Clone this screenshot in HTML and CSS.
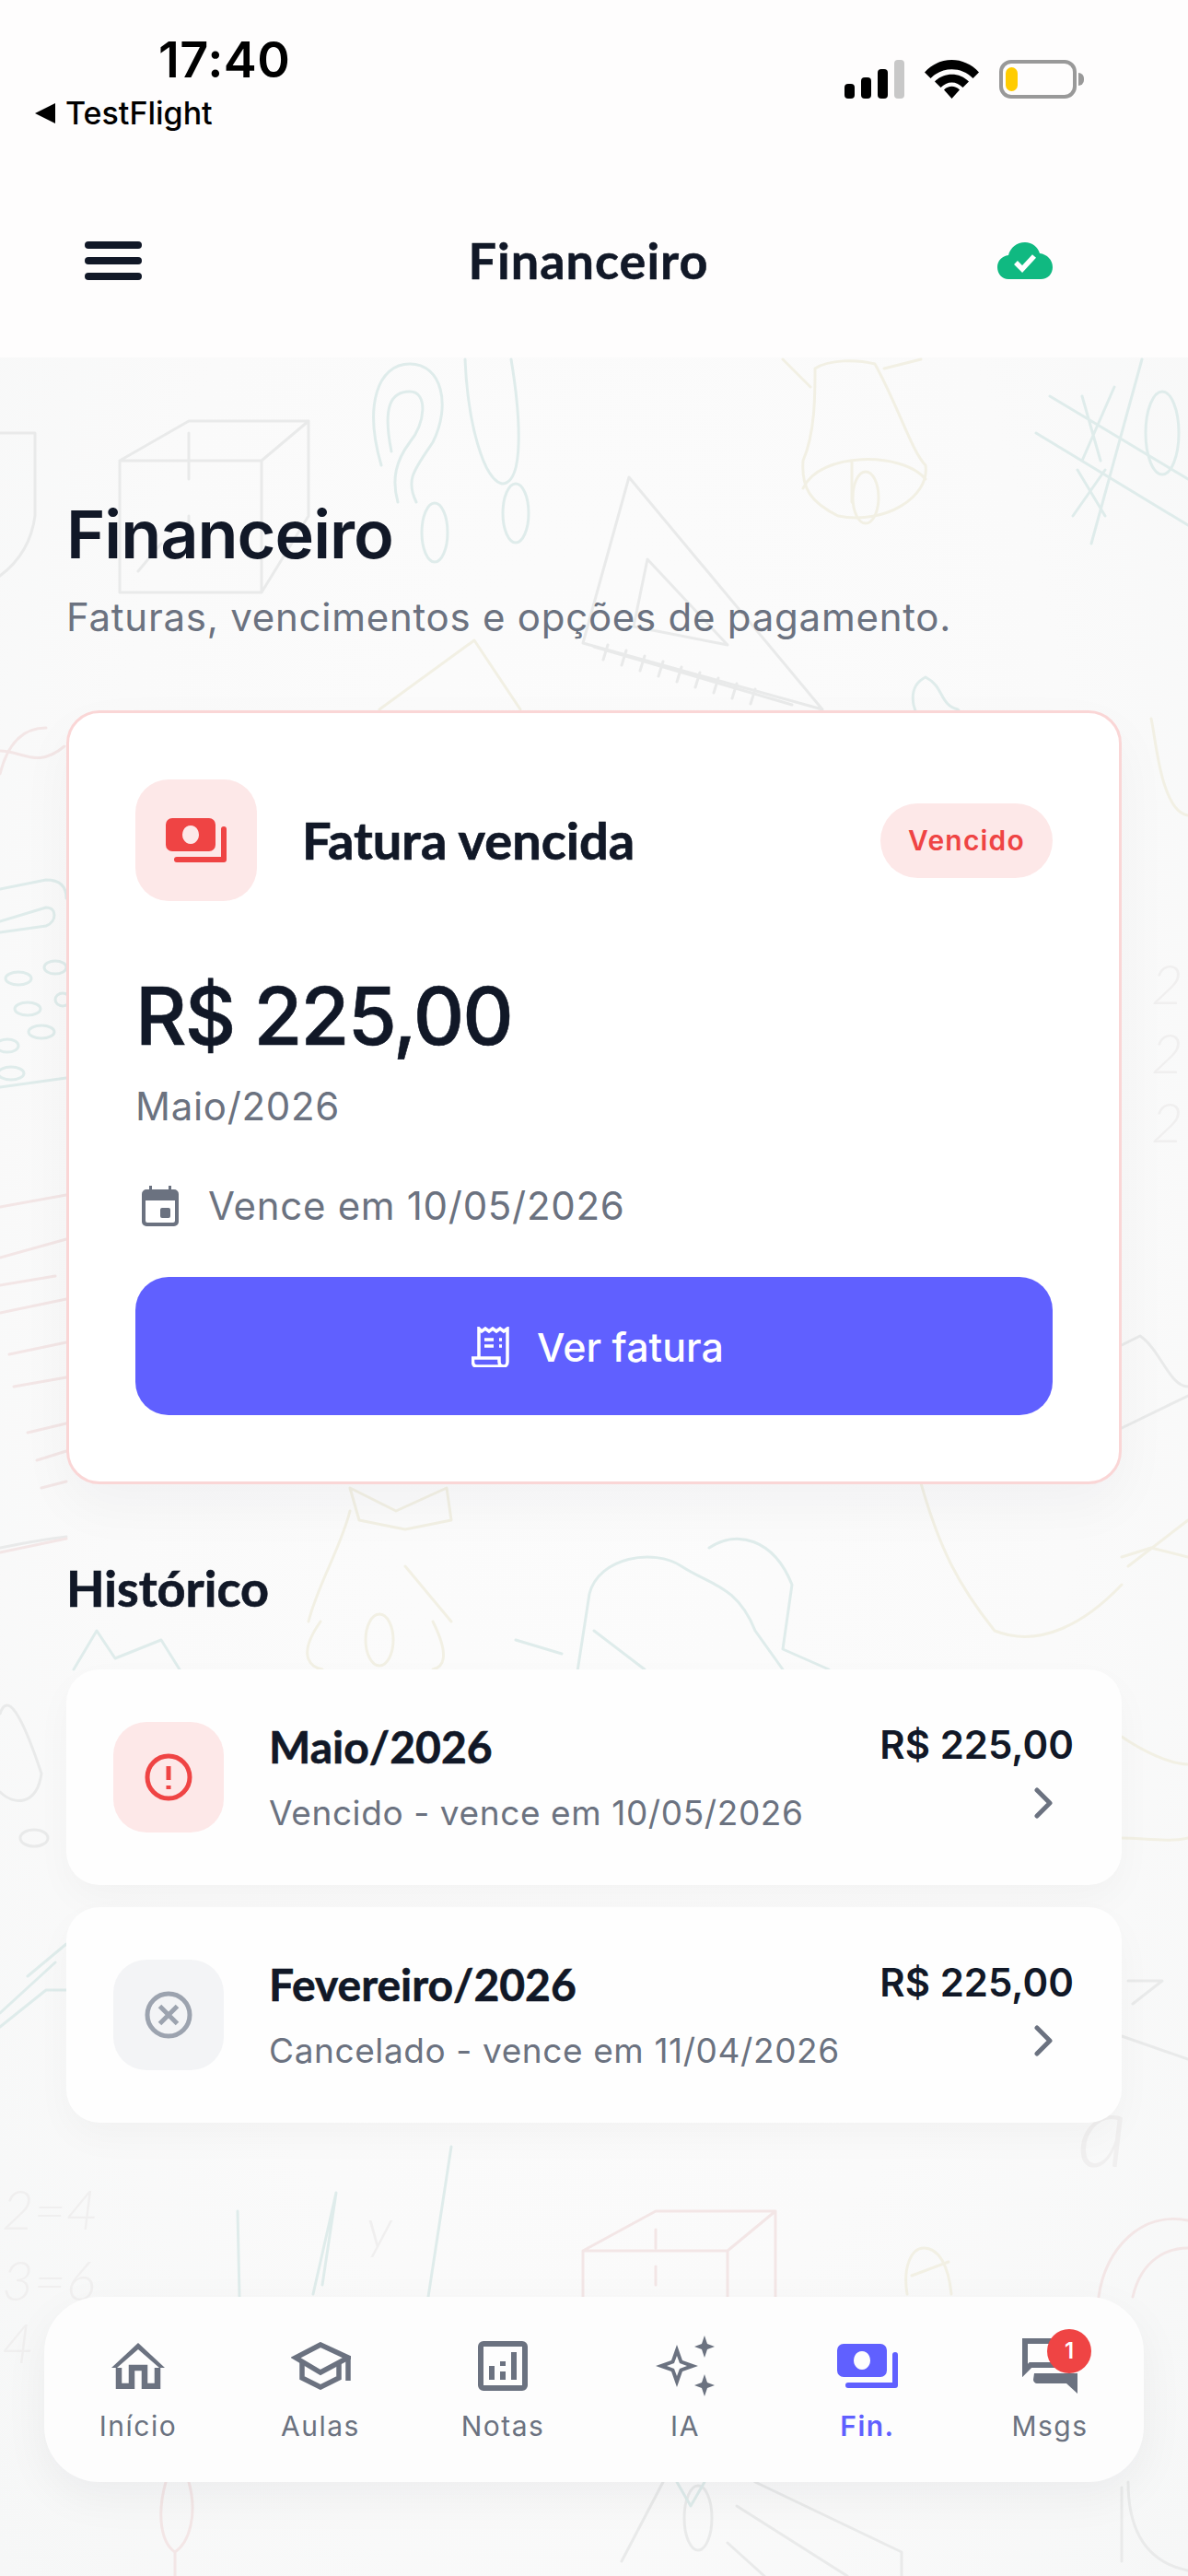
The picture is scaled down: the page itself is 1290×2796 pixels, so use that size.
FILE: index.html
```html
<!DOCTYPE html>
<html lang="pt-BR">
<head>
<meta charset="utf-8">
<title>Financeiro</title>
<link rel="stylesheet" href="styles.css">
</head>
<body>
<svg width="0" height="0" class="defs">
  <defs>
    <symbol id="money" viewBox="0 0 66 48">
      <path fill-rule="evenodd" d="M7 0H47a7 7 0 0 1 7 7V29a7 7 0 0 1-7 7H7a7 7 0 0 1-7-7V7a7 7 0 0 1 7-7ZM27 8a9 10 0 1 0 .01 0Z"/>
      <path d="M63 12V45H12" fill="none" stroke="currentColor" stroke-width="6" stroke-linecap="round" stroke-linejoin="round"/>
    </symbol>
  </defs>
</svg>
<div class="app">
  <svg class="doodles" viewBox="0 0 1290 2796" fill="none" stroke-linecap="round" stroke-linejoin="round" stroke-width="3">
    <g stroke="#e9eaea">
      <path d="M130 500H284V643H130ZM130 500L205 457H335V560L284 643M284 500L335 457M205 470V520M205 560V600M150 620L175 590"/>
      <path d="M0 470H38V560C34 590 20 610 0 625"/>
      <path d="M683 518L633 698L893 770ZM703 607L688 680L790 700Z"/>
      <path d="M645 702L860 765M660 700L655 716M680 706L675 722M700 712L695 728M720 718L715 734M740 724L735 740M760 730L755 746M780 736L775 752M800 742L795 758M820 748L815 764"/>
      <path d="M0 1680C25 1675 55 1670 72 1668"/>
      <path d="M0 1860C10 1830 30 1880 45 1925C40 1960 15 1960 0 1945"/>
      <ellipse cx="37" cy="1995" rx="15" ry="9"/>
      <path d="M1218 1460L1238 1450C1260 1465 1270 1505 1290 1505M1218 1550L1290 1515"/>
      <path d="M675 2780L720 2694M820 2694L979 2770V2796M800 2720L920 2796M790 2760L830 2796"/>
      <ellipse cx="758" cy="2733" rx="15" ry="35"/>
      <path d="M1225 2694C1225 2740 1240 2780 1290 2790M1218 2700V2780"/>
      <path d="M1225 2150H1262L1230 2175M1218 2210L1290 2235"/>
    </g>
    <g stroke="#dfeceb">
      <path d="M414 505C395 440 410 395 445 395C480 395 490 440 470 480C450 510 440 520 452 545M425 490C415 440 425 425 445 425C465 425 462 460 445 480C430 500 425 520 432 545"/>
      <ellipse cx="472" cy="578" rx="14" ry="32"/>
      <ellipse cx="560" cy="557" rx="14" ry="32"/>
      <path d="M505 390C508 460 525 520 545 525C570 525 565 450 555 390"/>
      <path d="M1140 430L1290 520M1125 470L1290 570M1240 390L1185 590M1170 510L1200 560M1200 510L1165 560M1175 430L1195 500M1210 420L1175 500"/>
      <ellipse cx="1262" cy="470" rx="18" ry="45"/>
      <path d="M1000 780C990 770 985 745 1005 735C1025 745 1020 765 1040 770C1060 790 1020 830 1000 780Z"/>
      <path d="M0 965L50 955C68 955 72 965 72 975M0 1000L50 985C62 985 62 1000 50 1005L0 1012M0 1180L72 1170"/>
      <ellipse cx="20" cy="1062" rx="14" ry="7"/><ellipse cx="60" cy="1050" rx="12" ry="7"/><ellipse cx="30" cy="1095" rx="14" ry="7"/><ellipse cx="45" cy="1120" rx="14" ry="7"/><ellipse cx="8" cy="1135" rx="12" ry="7"/><ellipse cx="12" cy="1165" rx="14" ry="7"/><ellipse cx="68" cy="1085" rx="8" ry="7"/>
      <path d="M0 2200L50 2160H72M0 2185L60 2130M30 2145L72 2110"/>
      <path d="M623 1840L640 1730C650 1690 710 1680 740 1700C770 1720 800 1720 820 1770M770 1680C800 1660 840 1670 860 1720L850 1790L900 1812M820 1770L850 1812M645 1770L700 1812M560 1780L610 1795"/>
      <path d="M80 1812L105 1770L125 1800L175 1780L195 1812"/>
      <path d="M258 2400L260 2493M340 2490L365 2380L350 2480M465 2493L490 2330"/>
      <path d="M735 2694L750 2720L765 2694"/>
    </g>
    <g stroke="#f2f0e4">
      <path d="M885 400C900 390 930 390 950 395C975 440 990 490 1005 505C1010 540 960 570 910 560C880 545 870 530 872 500C885 470 885 430 885 400Z"/>
      <path d="M872 530C890 490 980 490 1005 520M925 500V545"/>
      <ellipse cx="940" cy="540" rx="14" ry="28"/>
      <path d="M850 390L880 420M1000 390L960 400"/>
      <path d="M412 770L515 695L565 770"/>
      <path d="M335 1760C345 1720 370 1680 380 1640M440 1700L490 1760M348 1760C320 1800 340 1810 350 1812M470 1760C490 1800 480 1810 470 1812M380 1615L430 1640L485 1615L490 1650L440 1660L390 1650Z"/>
      <ellipse cx="412" cy="1780" rx="15" ry="28"/>
      <path d="M1000 1610C1020 1680 1040 1720 1080 1770C1130 1790 1180 1760 1218 1720M1225 1700L1290 1650"/>
      <path d="M1250 780C1255 800 1260 880 1290 885M1218 1690L1250 1680L1290 1690M1218 1885C1240 1900 1270 1915 1290 1915M1218 1995C1240 1995 1270 2000 1290 1995"/>
      <path d="M985 2490C980 2460 990 2440 1003 2440C1020 2440 1030 2460 1033 2490M990 2470L1030 2455"/>
    </g>
    <g stroke="#f3e6e6">
      <path d="M633 2443H790V2494M633 2443V2494M633 2443L712 2400H842V2494M790 2443L842 2400M712 2420V2440M712 2460V2480" />
      <path d="M0 840C10 800 30 790 50 790M0 815C25 815 40 835 70 810"/>
      <path d="M0 1310L72 1297M0 1365L72 1345M0 1395L60 1385M0 1425L72 1410M10 1470L72 1457M15 1505L72 1495M30 1555L72 1545M40 1585L72 1575M45 1615L72 1608M0 1685L72 1670"/>
      <path d="M180 2694C170 2730 175 2760 190 2770C205 2760 215 2730 205 2694M190 2770V2796"/>
      <path d="M1193 2493C1200 2440 1240 2400 1290 2410M1230 2493C1240 2450 1270 2440 1290 2440"/>
    </g>
    <g class="doodle-text">
      <text x="2" y="2420">2=4</text>
      <text x="2" y="2497">3=6</text>
      <text x="2" y="2565">4</text>
      <text x="1170" y="2352" class="doodle-big">a</text>
      <text x="398" y="2440">y</text>
      <text x="1250" y="1090">2</text>
      <text x="1250" y="1165">2</text>
      <text x="1250" y="1240">2</text>
    </g>
  </svg>

  <header class="topbar">
    <div class="status">
      <div class="status-left">
        <div class="clock">17:40</div>
        <div class="back"><span class="back-tri"></span>TestFlight</div>
      </div>
      <div class="status-right">
        <div class="signal"><i class="b1"></i><i class="b2"></i><i class="b3"></i><i class="b4"></i></div>
        <svg class="wifi" viewBox="0 0 59 42"><path d="M0 13.500C16-4.500 43-4.500 59 13.500L52.500 20C40 7 19 7 6.500 20Z M11 23.500C21 13 38 13 48 23.500L41.500 30C34.500 22.500 24.500 22.500 17.500 30Z M21 32.500C26 27.500 33 27.500 38 32.500L29.500 42Z"/></svg>
        <div class="battery"><div class="battery-body"><span class="battery-level"></span></div><span class="battery-nub"></span></div>
      </div>
    </div>
    <div class="appbar">
      <div class="menu"><i></i><i></i><i></i></div>
      <div class="appbar-title">Financeiro</div>
      <svg class="cloud" viewBox="0 0 60 40"><path d="M30 0C38 0 44 5 46 12C54 13 60 19 60 27C60 34 55 40 47 40H12C5 40 0 34 0 27C0 20 5 15 12 14C14 6 21 0 30 0Z" fill="#10b981"/><path d="M20 22L27 29L40 15" fill="none" stroke="#fff" stroke-width="5.500"/></svg>
    </div>
  </header>

  <main class="content">
    <h1 class="page-title">Financeiro</h1>
    <p class="page-sub">Faturas, vencimentos e opções de pagamento.</p>

    <section class="invoice">
      <div class="invoice-head">
        <div class="icon-box icon-box-lg red"><svg class="money" fill="currentColor"><use href="#money"/></svg></div>
        <h2 class="invoice-title">Fatura vencida</h2>
        <span class="pill">Vencido</span>
      </div>
      <div class="invoice-amount">R$ 225,00</div>
      <div class="invoice-month">Maio/2026</div>
      <div class="invoice-due">
        <svg class="cal" viewBox="0 0 40 44"><path fill="#6b7280" d="M8 0h3v4h18V0h3v4h3a5 5 0 0 1 5 5v30a5 5 0 0 1-5 5H5a5 5 0 0 1-5-5V9a5 5 0 0 1 5-5h3ZM4 16V38a2 2 0 0 0 2 2H34a2 2 0 0 0 2-2V16Z"/><rect x="20" y="24" width="11" height="11" rx="2" fill="#6b7280"/></svg>
        <span>Vence em 10/05/2026</span>
      </div>
      <button class="btn">
        <svg class="receipt" viewBox="0 0 41 44" fill="none" stroke="#fff" stroke-width="3.500"><path d="M8 34V2L11 5L15 2L19 5L23 2L27 5L31 2L35 5L39 2V38C39 41 37 43 35 43H6C3 43 1.500 41 1.500 38V34H30V38C30 41 32 43 35 43"/><path d="M14 14H24M14 21H24M30 14H33M30 21H33"/></svg>
        <span>Ver fatura</span>
      </button>
    </section>

    <h2 class="section-title">Histórico</h2>
    <div class="history">
      <article class="row">
        <div class="icon-box red"><svg class="status-icon" viewBox="0 0 52 52" fill="none" stroke="currentColor" stroke-width="5"><circle cx="26" cy="26" r="23"/><path d="M26 14V29M26 35V39" stroke-linejoin="round"/></svg></div>
        <div class="row-main"><h3 class="row-title">Maio/2026</h3><p class="row-sub">Vencido - vence em 10/05/2026</p></div>
        <div class="row-side"><strong class="row-amount">R$ 225,00</strong><svg class="chev" viewBox="0 0 22 34" fill="none" stroke="#6b7280" stroke-width="5" stroke-linecap="round" stroke-linejoin="round"><path d="M4 3L18 17L4 31"/></svg></div>
      </article>
      <article class="row">
        <div class="icon-box grey"><svg class="status-icon" viewBox="0 0 52 52" fill="none" stroke="currentColor" stroke-width="5"><circle cx="26" cy="26" r="23"/><path d="M16.500 16.500L35.500 35.500M35.500 16.500L16.500 35.500"/></svg></div>
        <div class="row-main"><h3 class="row-title">Fevereiro/2026</h3><p class="row-sub">Cancelado - vence em 11/04/2026</p></div>
        <div class="row-side"><strong class="row-amount">R$ 225,00</strong><svg class="chev" viewBox="0 0 22 34" fill="none" stroke="#6b7280" stroke-width="5" stroke-linecap="round" stroke-linejoin="round"><path d="M4 3L18 17L4 31"/></svg></div>
      </article>
    </div>
  </main>

  <nav class="nav">
    <a class="nav-item">
      <span class="nav-icon"><svg width="58" height="50" viewBox="0 0 58 50" fill="none" stroke="currentColor" stroke-width="6"><path d="M8 27V47H22V27H36V47H50V27" stroke-width="6.500"/><path d="M29 0L58 27H52L29 7L6 27H0Z" fill="currentColor" stroke="none"/></svg></span>
      <span class="nav-label">Início</span>
    </a>
    <a class="nav-item">
      <span class="nav-icon"><svg width="65" height="52" viewBox="0 0 65 52" fill="none" stroke="currentColor" stroke-width="5.500"><path d="M32 3L5 17L32 33L62 17Z"/><path d="M12 21V39L32 49L52 39V21"/><path d="M62 15V42"/></svg></span>
      <span class="nav-label">Aulas</span>
    </a>
    <a class="nav-item">
      <span class="nav-icon"><svg width="54" height="54" viewBox="0 0 54 54" fill="none"><rect x="3" y="3" width="48" height="48" rx="3" stroke="currentColor" stroke-width="6"/><path d="M12 27h6v15h-6ZM24 22h6v5h-6ZM24 33h6v9h-6ZM36 12h6v30h-6Z" fill="currentColor"/></svg></span>
      <span class="nav-label">Notas</span>
    </a>
    <a class="nav-item">
      <span class="nav-icon"><svg width="64" height="66" viewBox="0 0 64 66"><path fill="currentColor" fill-rule="evenodd" d="M23 10L29 27L46 33L29 39L23 56L17 39L0 33L17 27ZM23 22L20 30L12 33L20 36L23 44L26 36L34 33L26 30Z"/><path fill="currentColor" d="M53 0L56 9L64 12L56 15L53 24L50 15L42 12L50 9ZM53 42L56 51L64 54L56 57L53 66L50 57L42 54L50 51Z"/></svg></span>
      <span class="nav-label">IA</span>
    </a>
    <a class="nav-item active">
      <span class="nav-icon"><svg class="money" fill="currentColor"><use href="#money"/></svg></span>
      <span class="nav-label">Fin.</span>
    </a>
    <a class="nav-item">
      <span class="nav-icon msgs"><svg width="60" height="60" viewBox="0 0 60 60" fill="none"><path d="M3 3H45V29H9L3 35Z" stroke="currentColor" stroke-width="6"/><path d="M13 38H60V60L48 49H16C14 49 12 47 12 45Z" fill="currentColor"/></svg><b class="badge">1</b></span>
      <span class="nav-label">Msgs</span>
    </a>
  </nav>
</div>
</body>
</html>
```

FILE: styles.css
```css
* { box-sizing: border-box; }
html, body { margin: 0; padding: 0; }
body { background: #f9fafa; font-family: "Inter", "Liberation Sans", sans-serif; color: #111827; }
h1, h2, h3, p { margin: 0; }
.defs { position: absolute; }
.app { position: relative; width: 1290px; height: 2796px; overflow: hidden; display: flex; flex-direction: column; background: radial-gradient(ellipse at 50% 45%, #fcfcfc 0%, #fafafa 60%, #f6f7f7 100%); }
.doodles { position: absolute; inset: 0; width: 1290px; height: 2796px; filter: blur(0.7px); }
.doodle-text text { fill: #f0efef; stroke: none; font-family: "Lato", sans-serif; font-style: italic; font-size: 60px; font-weight: 300; }
.doodle-text .doodle-big { font-size: 110px; }

.topbar { position: relative; height: 388px; background: #fefdfd; flex: none; }
.status { display: flex; justify-content: space-between; height: 150px; padding: 34px 113px 0 38px; }
.status-left { display: flex; flex-direction: column; }
.clock { font-family: "Inter", sans-serif; font-size: 54px; line-height: 62px; font-weight: 600; color: #000; margin-left: 134px; letter-spacing: 0.5px; }
.back { display: flex; align-items: center; gap: 11px; font-size: 34px; line-height: 44px; font-weight: 500; color: #000; margin-top: 5px; }
.back-tri { width: 0; height: 0; border-style: solid; border-width: 11px 22px 11px 0; border-color: transparent #000 transparent transparent; }
.status-right { display: flex; align-items: flex-start; padding-top: 31px; }
.signal { display: flex; align-items: flex-end; gap: 7px; height: 42px; margin-right: 22px; }
.signal i { display: block; width: 11px; background: #000; border-radius: 4px; }
.signal .b1 { height: 16px; }
.signal .b2 { height: 23px; }
.signal .b3 { height: 32px; }
.signal .b4 { height: 42px; background: #c8c8c8; }
.wifi { width: 59px; height: 42px; margin-right: 22px; margin-top: 0; }
.battery { display: flex; align-items: center; height: 42px; gap: 2px; }
.battery-body { width: 84px; height: 42px; border: 4px solid #999; border-radius: 13px; padding: 4px 3px; }
.battery-level { display: block; width: 13px; height: 26px; background: #ffcc00; border-radius: 7px; }
.battery-nub { width: 6px; height: 14px; background: #999; border-radius: 0 7px 7px 0; }
.appbar { display: flex; align-items: center; justify-content: space-between; height: 66px; margin-top: 100px; padding: 0 147px 0 92px; position: relative; }
.menu { display: flex; flex-direction: column; gap: 9px; width: 62px; }
.menu i { display: block; height: 8px; background: #111827; border-radius: 4px; }
.appbar-title { position: absolute; left: 0; right: 0; text-align: center; font-family: "Lato", sans-serif; font-weight: 700; font-size: 54px; letter-spacing: 1px; line-height: 66px; color: #111827; padding-right: 12px; -webkit-text-stroke: 0.5px #111827; }
.cloud { width: 60px; height: 40px; }

.content { position: relative; padding: 0 72px; flex: 1; }
.page-title { font-size: 72px; font-weight: 600; line-height: 90px; color: #111827; margin-top: 147px; letter-spacing: -1px; }
.page-sub { font-size: 42px; line-height: 54px; color: #6b7280; margin-top: 18px; letter-spacing: 0.75px; }

.invoice { margin-top: 74px; height: 840px; background: #fff; border: 3px solid #fad6d6; border-radius: 36px; padding: 72px 72px 0; box-shadow: 0 24px 60px rgba(17, 24, 39, .04); }
.invoice-head { display: flex; align-items: center; height: 132px; }
.icon-box { flex: none; display: flex; align-items: center; justify-content: center; width: 120px; height: 120px; border-radius: 36px; }
.icon-box-lg { width: 132px; height: 132px; }
.red { background: #fde8e8; color: #ef4444; }
.grey { background: #f3f4f6; color: #9ca3af; }
.money { width: 66px; height: 48px; }
.invoice-title { margin-left: 49px; font-family: "Lato", sans-serif; font-size: 56px; font-weight: 700; line-height: 70px; color: #111827; -webkit-text-stroke: 0.7px #111827; }
.pill { margin-left: auto; display: flex; align-items: center; height: 81px; padding: 0 30px; border-radius: 41px; background: #fde8e8; color: #ef4444; font-size: 30px; font-weight: 600; letter-spacing: 1.2px; }
.invoice-amount { margin-top: 71px; font-size: 86px; font-weight: 500; line-height: 108px; color: #111827; letter-spacing: -1.9px; -webkit-text-stroke: 0.6px #111827; }
.invoice-month { margin-top: 16px; font-size: 42px; line-height: 56px; color: #6b7280; letter-spacing: 0.7px; }
.invoice-due { display: flex; align-items: center; gap: 32px; margin-top: 52px; padding-left: 7px; font-size: 42px; line-height: 56px; color: #6b7280; letter-spacing: 0.7px; }
.cal { width: 40px; height: 44px; }
.btn { display: flex; align-items: center; justify-content: center; gap: 30px; width: 100%; height: 150px; margin-top: 49px; padding: 2px 0 0 8px; border: 0; border-radius: 36px; background: #6060ff; color: #fff; font-family: inherit; font-size: 43px; font-weight: 500; }
.receipt { width: 41px; height: 44px; }

.section-title { margin-top: 78px; font-family: "Lato", sans-serif; font-size: 54px; font-weight: 700; line-height: 70px; color: #111827; -webkit-text-stroke: 0.7px #111827; }
.history { display: flex; flex-direction: column; gap: 24px; margin-top: 53px; }
.row { display: flex; align-items: center; height: 234px; padding: 0 52px 0 51px; background: #fefefe; border-radius: 36px; box-shadow: 0 16px 40px rgba(17, 24, 39, .03); }
.status-icon { width: 52px; height: 52px; }
.row-main { margin-left: 49px; flex: 1; }
.row-title { font-family: "Lato", sans-serif; font-size: 48px; font-weight: 700; line-height: 60px; color: #111827; -webkit-text-stroke: 0.6px #111827; }
.row-sub { margin-top: 17px; font-size: 37px; line-height: 50px; color: #6b7280; letter-spacing: 0.6px; }
.row-side { display: flex; flex-direction: column; align-items: flex-end; gap: 18px; margin-top: -18px; }
.row-amount { font-size: 42px; line-height: 56px; font-weight: 600; color: #111827; }
.chev { width: 22px; height: 34px; margin-right: 22px; }

.nav { position: relative; flex: none; display: grid; grid-template-columns: repeat(6, 1fr); height: 201px; margin: 0 48px 102px; padding: 36px 3px 0; background: #fdfdfd; border-radius: 60px; box-shadow: 0 16px 50px rgba(17, 24, 39, .05); }
.nav-item { display: flex; flex-direction: column; align-items: center; color: #6b7280; }
.nav-icon { display: flex; align-items: center; justify-content: center; height: 78px; position: relative; }
.nav-label { margin-top: 6px; font-size: 30px; line-height: 40px; letter-spacing: 1.500px; }
.active { color: #6060ff; }
.active .nav-label { font-weight: 600; }
.badge { position: absolute; left: 27px; top: -1px; width: 48px; height: 48px; border-radius: 50%; background: #ef4444; color: #fff; font-size: 24px; font-weight: 600; line-height: 48px; text-align: center; }
```
